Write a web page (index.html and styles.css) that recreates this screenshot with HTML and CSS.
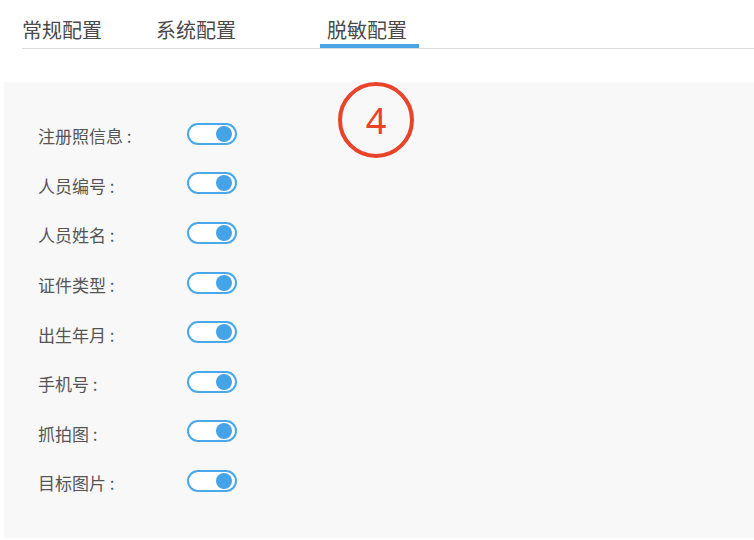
FILE: index.html
```html
<!DOCTYPE html>
<html lang="zh">
<head>
<meta charset="utf-8">
<link rel="stylesheet" href="styles.css">
</head>
<body>
<div class="tabs">
  <div class="tab t1">常规配置</div>
  <div class="tab t2">系统配置</div>
  <div class="tab t3 active">脱敏配置</div>
</div>
<div class="panel">
  <div class="badge">4</div>
  <div class="row"><span class="label">注册照信息 :</span><span class="toggle"><span class="knob"></span></span></div>
  <div class="row"><span class="label">人员编号 :</span><span class="toggle"><span class="knob"></span></span></div>
  <div class="row"><span class="label">人员姓名 :</span><span class="toggle"><span class="knob"></span></span></div>
  <div class="row"><span class="label">证件类型 :</span><span class="toggle"><span class="knob"></span></span></div>
  <div class="row"><span class="label">出生年月 :</span><span class="toggle"><span class="knob"></span></span></div>
  <div class="row"><span class="label">手机号 :</span><span class="toggle"><span class="knob"></span></span></div>
  <div class="row"><span class="label">抓拍图 :</span><span class="toggle"><span class="knob"></span></span></div>
  <div class="row"><span class="label">目标图片 :</span><span class="toggle"><span class="knob"></span></span></div>
</div>
</body>
</html>
```
FILE: styles.css
```css
html, body {
  margin: 0;
  padding: 0;
  background: #ffffff;
  font-family: "Noto Sans CJK SC", "Noto Sans", sans-serif;
}
.tabs {
  display: flex;
  margin-left: 22px;
  padding-top: 16px;
  border-bottom: 1px solid #dcdcdc;
}
.tab {
  font-size: 20px;
  line-height: 28px;
  color: #4a4a4a;
  border-bottom: 4px solid transparent;
  box-sizing: border-box;
}
.t2 { margin-left: 54px; }
.t3 { margin-left: 84px; padding: 0 12px 0 7px; }
.tab.active { border-bottom-color: #4aa5e6; }
.panel {
  position: relative;
  margin: 33px 0 0 4px;
  height: 456px;
  background: #f8f8f8;
  padding: 29px 0 0 34px;
  box-sizing: border-box;
}
.badge {
  position: absolute;
  left: 334px;
  top: 0;
  width: 76px;
  height: 76px;
  box-sizing: border-box;
  border: 4px solid #e8432b;
  border-radius: 50%;
  color: #e8432b;
  font-family: "Noto Sans", sans-serif;
  font-weight: 400;
  font-size: 36px;
  display: flex;
  align-items: center;
  justify-content: center;
}
.row {
  display: flex;
  align-items: center;
  height: 49.6px;
}
.label {
  width: 149px;
  font-size: 17px;
  color: #555555;
  white-space: pre;
}
.toggle {
  width: 50px;
  height: 22px;
  box-sizing: border-box;
  border: 2.5px solid #4aa8ea;
  border-radius: 11px;
  background: #ffffff;
  display: flex;
  align-items: center;
  justify-content: flex-end;
  padding-right: 3.5px;
  margin-top: -4px;
}
.knob {
  width: 16px;
  height: 16px;
  border-radius: 50%;
  background: #45a3e8;
}
```
